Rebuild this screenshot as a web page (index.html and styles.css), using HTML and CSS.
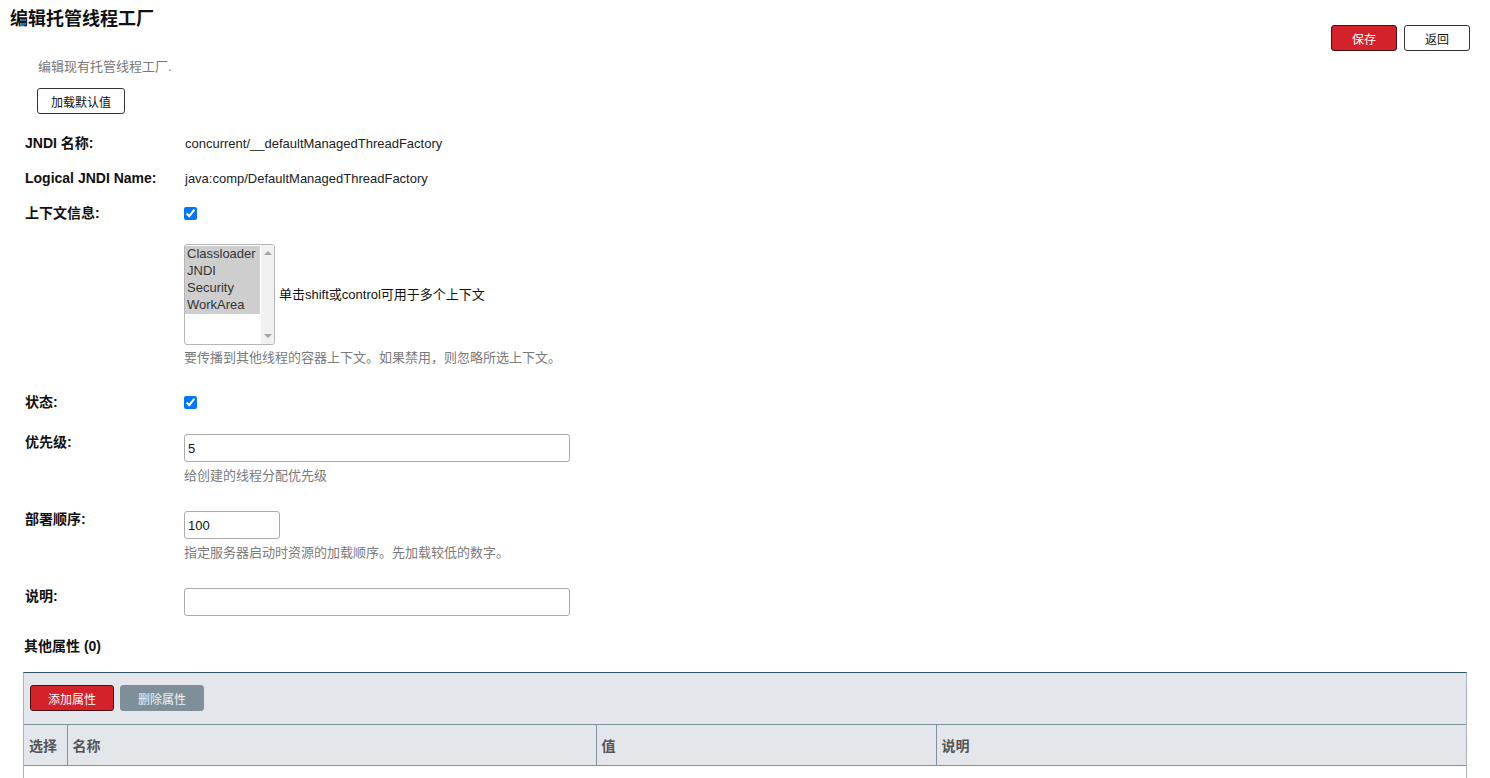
FILE: index.html
```html
<!DOCTYPE html>
<html lang="zh-CN">
<head>
  <meta charset="UTF-8" />
  <title>编辑托管线程工厂</title>
  <link rel="stylesheet" href="styles.css">
</head>
<body>
  <div class="page-header">
    <div class="header-left">
      <h1 class="page-title">编辑托管线程工厂</h1>
      <p class="page-desc">编辑现有托管线程工厂.</p>
      <button class="btn btn-plain btn-defaults">加载默认值</button>
    </div>
    <div class="header-actions">
      <button class="btn btn-red btn-head">保存</button>
      <button class="btn btn-plain btn-head">返回</button>
    </div>
  </div>

  <div class="form">
    <div class="row row-static">
      <div class="row-label">JNDI 名称:</div>
      <div class="row-field">concurrent/__defaultManagedThreadFactory</div>
    </div>
    <div class="row row-static">
      <div class="row-label">Logical JNDI Name:</div>
      <div class="row-field">java:comp/DefaultManagedThreadFactory</div>
    </div>
    <div class="row row-static">
      <div class="row-label">上下文信息:</div>
      <div class="row-field">
        <input type="checkbox" class="check" checked />
        <div class="context-box">
          <div class="select-wrap">
            <select class="context-select" multiple size="6">
              <option selected>Classloader</option>
              <option selected>JNDI</option>
              <option selected>Security</option>
              <option selected>WorkArea</option>
            </select>
            <div class="fake-scroll">
              <span class="arrow-up"></span>
              <span class="arrow-down"></span>
            </div>
          </div>
          <span class="context-hint">单击shift或control可用于多个上下文</span>
        </div>
        <div class="help">要传播到其他线程的容器上下文。如果禁用，则忽略所选上下文。</div>
      </div>
    </div>
    <div class="row row-status">
      <div class="row-label">状态:</div>
      <div class="row-field"><input type="checkbox" class="check" checked /></div>
    </div>
    <div class="row row-input">
      <div class="row-label">优先级:</div>
      <div class="row-field">
        <input type="text" class="text-input wide" value="5" />
        <div class="help">给创建的线程分配优先级</div>
      </div>
    </div>
    <div class="row row-input">
      <div class="row-label">部署顺序:</div>
      <div class="row-field">
        <input type="text" class="text-input narrow" value="100" />
        <div class="help">指定服务器启动时资源的加载顺序。先加载较低的数字。</div>
      </div>
    </div>
    <div class="row row-input">
      <div class="row-label">说明:</div>
      <div class="row-field">
        <input type="text" class="text-input wide" value="" />
      </div>
    </div>
  </div>

  <h2 class="section-title">其他属性 (0)</h2>

  <div class="props">
    <div class="props-toolbar">
      <button class="btn btn-red btn-tool">添加属性</button>
      <button class="btn btn-gray btn-tool">删除属性</button>
    </div>
    <table class="props-table">
      <thead>
        <tr>
          <th class="col-select">选择</th>
          <th class="col-name">名称</th>
          <th class="col-value">值</th>
          <th>说明</th>
        </tr>
      </thead>
      <tbody>
        <tr><td colspan="4" class="empty"></td></tr>
      </tbody>
    </table>
  </div>
</body>
</html>
```

FILE: styles.css
```css
* {
  box-sizing: border-box;
}

body {
  margin: 0;
  font-family: "Liberation Sans", Arial, "Noto Sans CJK SC", sans-serif;
  font-size: 13px;
  color: #222;
  background: #fff;
}

.page-header {
  display: flex;
  justify-content: space-between;
  align-items: flex-start;
}

.page-title {
  margin: 8px 0 0 10px;
  font-size: 18px;
  line-height: 22px;
  font-weight: bold;
  color: #111;
}

.page-desc {
  margin: 29px 0 0 38px;
  font-size: 13px;
  line-height: 15px;
  color: #777;
}

.btn {
  font-family: inherit;
  font-size: 12px;
  height: 26px;
  border-radius: 3px;
  padding: 0;
  cursor: pointer;
}

.btn-plain {
  background: #fff;
  color: #111;
  border: 1px solid #333;
}

.btn-red {
  background: #d3222a;
  color: #fff;
  border: 1px solid #4a1114;
}

.btn-gray {
  background: #7f8f99;
  color: #eef3f6;
  border: 1px solid #7f8f99;
}

.btn-defaults {
  margin: 14px 0 0 37px;
  width: 88px;
}

.header-actions {
  display: flex;
  gap: 7px;
  margin: 25px 20px 0 0;
}

.btn-head {
  width: 66px;
}

.form {
  margin-top: 14px;
}

.row {
  display: flex;
  padding-left: 25px;
  line-height: 15px;
}

.row-label {
  width: 160px;
  flex: none;
  font-size: 14px;
  font-weight: bold;
  color: #111;
}

.row-field {
  color: #222;
}

.row-static {
  padding-top: 8px;
  padding-bottom: 12px;
}

.check {
  margin: 1px 0 0 -1px;
  width: 13px;
  height: 13px;
  vertical-align: top;
}

.context-box {
  display: flex;
  align-items: center;
  margin: 23px 0 0 -1px;
}

.select-wrap {
  position: relative;
  width: 91px;
  height: 101px;
}

.context-select {
  width: 91px;
  height: 101px;
  font-family: inherit;
  font-size: 13px;
  color: #333;
  border: 1px solid #b5b5b5;
  border-radius: 3px;
  padding: 1px 14px 0 0;
  overflow: hidden;
}

.context-select option {
  padding: 0 1px 2px 2px;
}

.context-select option:checked {
  background: #cecece;
  color: #333;
}

.fake-scroll {
  position: absolute;
  top: 1px;
  right: 1px;
  bottom: 1px;
  width: 13px;
  background: #f1f1f1;
  border-radius: 0 2px 2px 0;
}

.arrow-up,
.arrow-down {
  position: absolute;
  left: 3px;
  width: 0;
  height: 0;
  border-left: 4px solid transparent;
  border-right: 4px solid transparent;
}

.arrow-up {
  top: 6px;
  border-bottom: 4px solid #a3a3a3;
}

.arrow-down {
  bottom: 6px;
  border-top: 4px solid #a3a3a3;
}

.context-hint {
  margin-left: 4px;
  color: #111;
}

.help {
  margin: 5px 0 0 -1px;
  color: #7a7a7a;
}

.row-status {
  padding-top: 18px;
}

.row-input {
  margin-top: 28px;
}

.row-status + .row-input {
  margin-top: 24px;
}

.row-input .row-label {
  padding-top: 1px;
}

.text-input {
  height: 28px;
  margin-left: -1px;
  border: 1px solid #aaa;
  border-radius: 3px;
  padding: 0 3px;
  font-family: inherit;
  font-size: 13px;
  color: #111;
}

.wide {
  width: 386px;
}

.narrow {
  width: 96px;
}

.text-input + .help {
  margin-top: 6px;
}

.section-title {
  margin: 23px 0 0 24px;
  font-size: 14px;
  line-height: 15px;
  font-weight: bold;
  color: #111;
}

.props {
  margin: 18px 23px 0 23px;
  border-top: 1px solid #2f5262;
  border-left: 1px solid #a9b3b8;
  border-right: 1px solid #a9b3b8;
}

.props-toolbar {
  background: #e3e7ec;
  display: flex;
  gap: 6px;
  padding: 12px 6px 13px;
}

.btn-tool {
  width: 84px;
}

.props-table {
  width: 100%;
  border-collapse: collapse;
}

.props-table th {
  background: #e3e7ec;
  text-align: left;
  font-size: 14px;
  font-weight: bold;
  color: #555;
  height: 41px;
  padding: 0 5px;
  border-top: 1px solid #7e939b;
  border-bottom: 1px solid #7e939b;
  border-left: 1px solid #7e939b;
}

.props-table th:first-child {
  border-left: none;
}

.col-select {
  width: 43px;
}

.col-name {
  width: 529px;
}

.col-value {
  width: 340px;
}

.empty {
  height: 30px;
}
```
